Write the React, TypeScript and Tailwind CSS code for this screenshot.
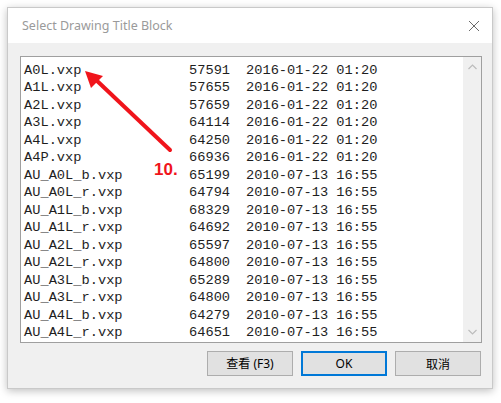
const rows: [string, string, string][] = [
  ["A0L.vxp", "57591", "2016-01-22 01:20"],
  ["A1L.vxp", "57655", "2016-01-22 01:20"],
  ["A2L.vxp", "57659", "2016-01-22 01:20"],
  ["A3L.vxp", "64114", "2016-01-22 01:20"],
  ["A4L.vxp", "64250", "2016-01-22 01:20"],
  ["A4P.vxp", "66936", "2016-01-22 01:20"],
  ["AU_A0L_b.vxp", "65199", "2010-07-13 16:55"],
  ["AU_A0L_r.vxp", "64794", "2010-07-13 16:55"],
  ["AU_A1L_b.vxp", "68329", "2010-07-13 16:55"],
  ["AU_A1L_r.vxp", "64692", "2010-07-13 16:55"],
  ["AU_A2L_b.vxp", "65597", "2010-07-13 16:55"],
  ["AU_A2L_r.vxp", "64800", "2010-07-13 16:55"],
  ["AU_A3L_b.vxp", "65289", "2010-07-13 16:55"],
  ["AU_A3L_r.vxp", "64800", "2010-07-13 16:55"],
  ["AU_A4L_b.vxp", "64279", "2010-07-13 16:55"],
  ["AU_A4L_r.vxp", "64651", "2010-07-13 16:55"],
];

export default function App() {
  return (
    <div className="relative w-[501px] h-[403px] bg-white pl-[7px] pt-[7px]">
      {/* ventana del dialogo */}
      <div className="w-[486px] h-[382px] flex flex-col border border-[#c9c9c9] bg-[#f0f0f0] shadow-[0_2px_8px_rgba(0,0,0,0.25)]">
        <div className="h-[35px] bg-white flex items-center justify-between pl-[14px] pr-[10px]">
          <span className="text-[12.5px] text-[#9a9a9a] font-['Noto_Sans',sans-serif] mt-[1px]">
            Select Drawing Title Block
          </span>
          <svg width="12" height="12" viewBox="0 0 12 12" className="mr-[2px] mt-[1px]">
            <path d="M1 1 L11 11 M11 1 L1 11" stroke="#6b6b6b" strokeWidth="1" />
          </svg>
        </div>

        <div className="flex-1 flex flex-col pl-[12px] pr-[10px] pt-[13px]">
          {/* lista de archivos */}
          <div className="h-[287px] border border-[#9f9f9f] bg-white flex">
            <div className="flex-1 pt-[5px] pl-[3px] overflow-hidden">
              {rows.map(([name, size, date]) => (
                <div
                  key={name}
                  className="flex h-[17.47px] leading-[17.47px] whitespace-pre text-[13.7px] text-[#1e1e1e] font-['Liberation_Mono',monospace]"
                >
                  <span className="w-[165px]">{name}</span>
                  <span className="w-[57px]">{size}</span>
                  <span>{date}</span>
                </div>
              ))}
            </div>
            <div className="w-[18px] bg-[#f0f0f0] flex flex-col items-center justify-between py-[7px]">
              <svg width="9" height="6" viewBox="0 0 9 6">
                <path d="M0.5 5 L4.5 1 L8.5 5" stroke="#bcbcbc" fill="none" strokeWidth="1.2" />
              </svg>
              <svg width="9" height="6" viewBox="0 0 9 6">
                <path d="M0.5 1 L4.5 5 L8.5 1" stroke="#bcbcbc" fill="none" strokeWidth="1.2" />
              </svg>
            </div>
          </div>

          {/* botones */}
          <div className="flex justify-end gap-[8px] mt-[8px] pr-[1px]">
            <button className="w-[86px] h-[25px] bg-[#e1e1e1] border border-[#adadad] text-[12px] text-black font-['Noto_Sans','Noto_Sans_CJK_SC',sans-serif]">
              查看 (F3)
            </button>
            <button className="w-[86px] h-[25px] bg-[#e1e1e1] border-2 border-[#0078d7] text-[12px] text-black font-['Noto_Sans',sans-serif]">
              OK
            </button>
            <button className="w-[86px] h-[25px] bg-[#e1e1e1] border border-[#adadad] text-[12px] text-black font-['Noto_Sans_CJK_SC',sans-serif]">
              取消
            </button>
          </div>
        </div>
      </div>

      {/* flecha roja de anotacion */}
      <svg className="absolute left-0 top-0 pointer-events-none" width="501" height="403">
        <line x1="170" y1="150" x2="94" y2="78" stroke="#f0141b" strokeWidth="4" strokeLinecap="round" />
        <path d="M85 71 L103 76 L91 88 Z" fill="#f0141b" />
      </svg>
      <span className="absolute left-[154px] top-[157px] text-[17px] font-bold text-[#f0141b] font-['Liberation_Sans',sans-serif]">
        10.
      </span>
    </div>
  );
}
